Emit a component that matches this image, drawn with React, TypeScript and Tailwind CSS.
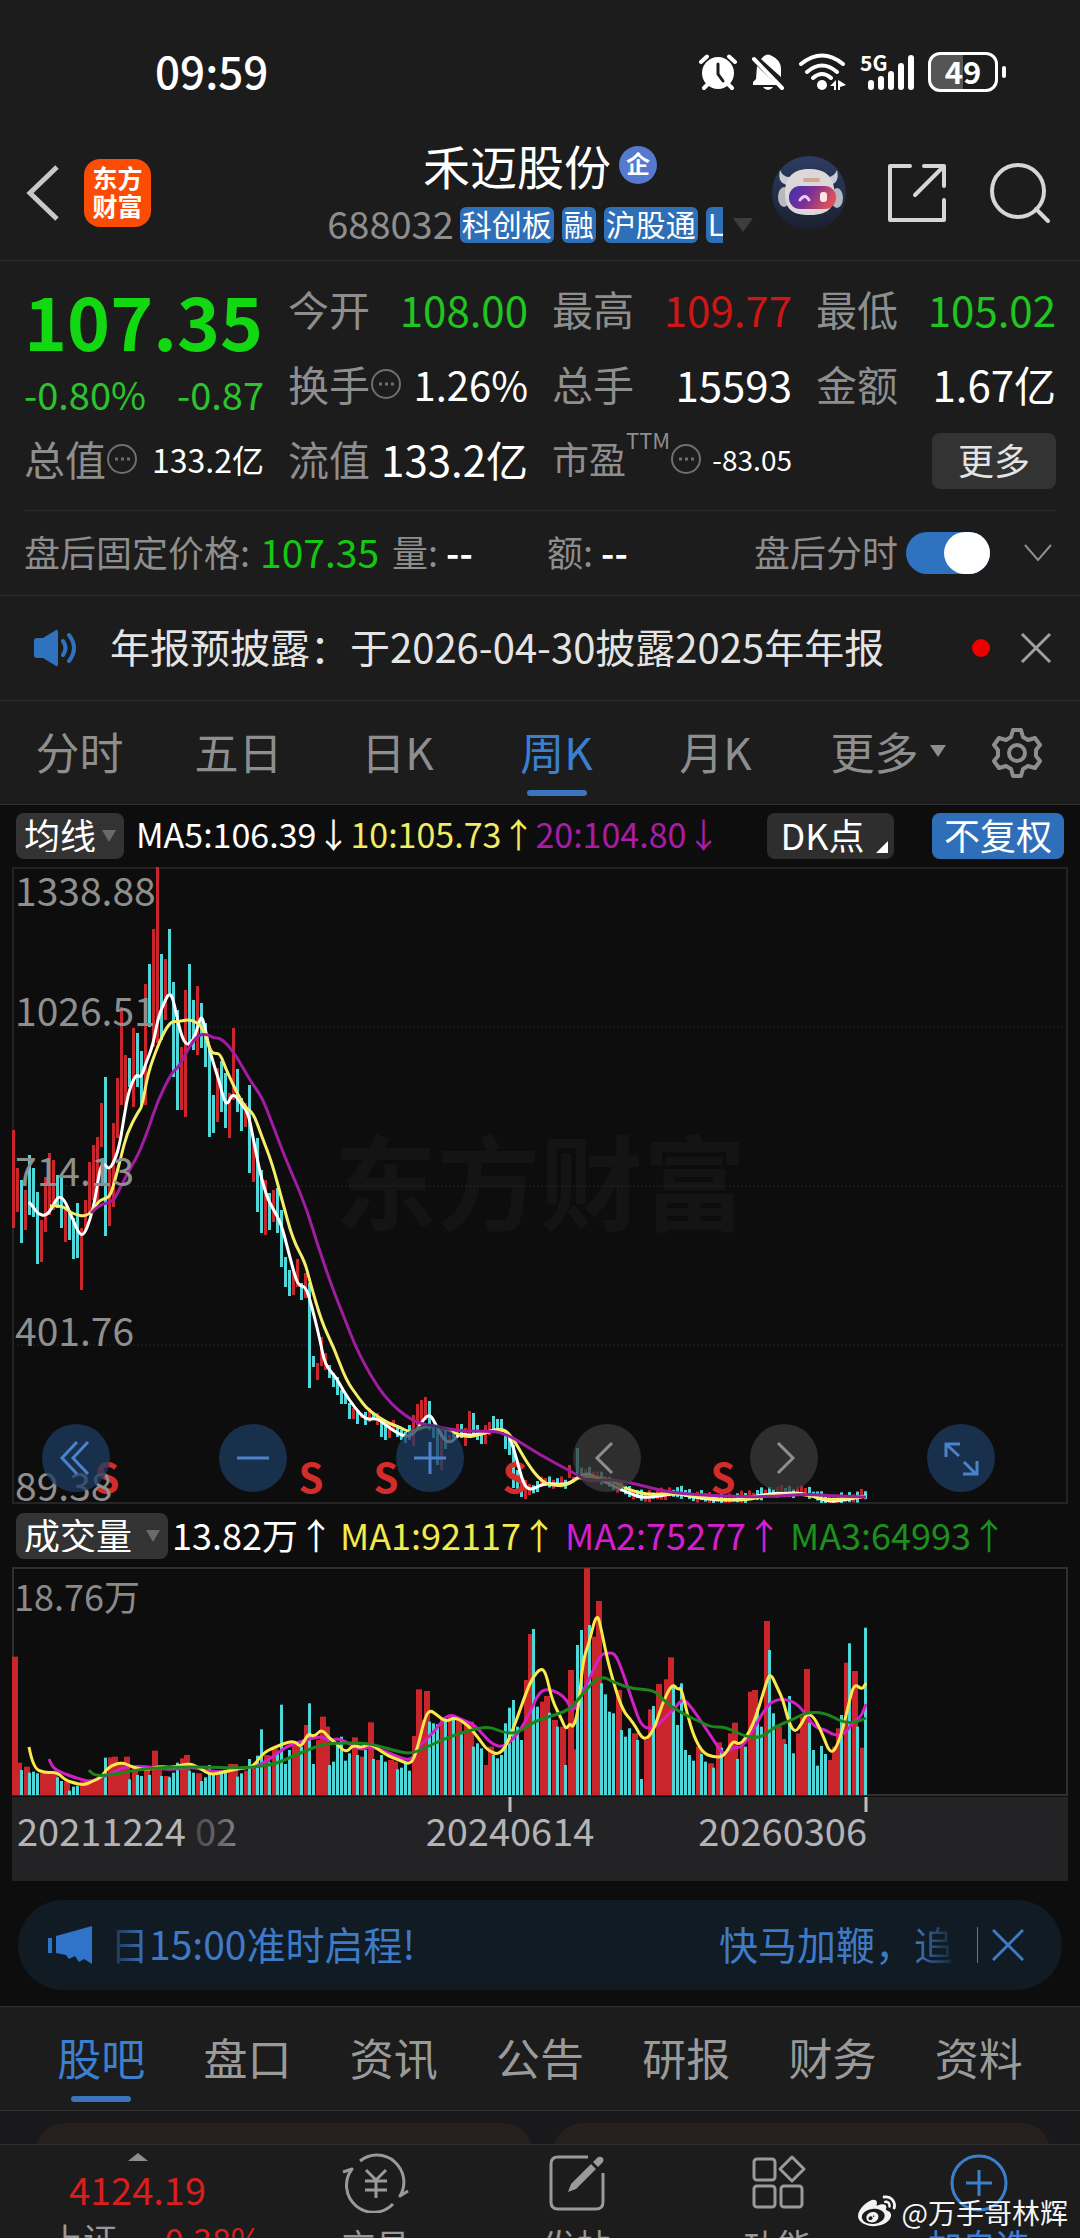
import React, { useState } from 'react';
import { FaWeibo } from 'react-icons/fa';

type Point = [number, number];

// one token per week: r = up, c = down, then the top of the volume bar on a 3x grid
const WEEKS = `r470 r788 c810 r800 c818 c815 c820 r820 r822 r820 r815 c832 c843 r845 c872 c860 c857 r845 r850 r848
r838 r838 r835 c773 r772 r770 r795 r785 r770 c838 r800 c825 c828 r810 c825 r752 r800 c828 r828 c832
c818 c788 r775 r765 c812 c818 r820 c843 c832 c795 c825 r820 c815 c818 r792 r792 c830 c820 r812 c777
r795 c767 c688 r765 c787 r745 c758 c614 c792 c750 r735 r735 c740 r675 c610 c792 r720 r650 r680 c795
c785 c735 c710 c782 c760 r712 c765 r770 c750 r667 c777 r780 c765 c785 r780 r785 c808 c803 c790 c812
r708 r568 r660 r573 c665 c670 c673 r655 c660 r645 c650 r660 c700 r670 r665 c740 c730 c745 r795 r740
c765 c775 c765 c670 c623 c600 c680 c720 r540 r402 c387 c620 r605 r588 c638 r660 c680 r680 c795 r510
r748 c435 c390 r205 c375 r410 r303 c550 c583 c635 c640 r570 c690 c710 c685 r700 c720 c837 r720 r628
c618 r552 r600 r538 r472 c555 c675 c550 c750 c765 c782 r740 c762 c785 r790 c803 r727 c743 r760 r700
r668 c777 r740 c740 r575 r570 c625 c680 r363 c450 c640 r680 r717 c732 c588 c760 r700 r650 r507 c668
c750 c797 c738 c762 r780 r740 r685 c645 r488 c430 r513 c680 r743 c383`
  .trim()
  .split(/\s+/)
  .map((t) => ({ up: t[0] === 'r', top: Number(t.slice(1)) }));

// high and low of each candle
const CANDLES = `1130,1228 1168,1212 1180,1243 1190,1230 1155,1215 1168,1217 1192,1264 1220,1262 1177,1232 1153,1215
1160,1210 1175,1208 1178,1228 1207,1242 1210,1240 1218,1259 1203,1258 1228,1290 1200,1230 1162,1215
1145,1200 1137,1203 1103,1147 1077,1236 1167,1226 1123,1207 1078,1138 1007,1105 1055,1107 1058,1087
1028,1107 1033,1087 1051,1107 984,1105 964,1027 929,1047 867,1043 954,1040 959,1020 929,993
982,1077 1010,1110 1047,1110 990,1117 964,1047 1000,1050 986,1055 1003,1048 1023,1067 1050,1137
1095,1133 1068,1122 1061,1112 1073,1128 1093,1138 1028,1100 1069,1112 1098,1131 1103,1127 1085,1173
1140,1182 1138,1212 1170,1233 1180,1235 1193,1230 1190,1222 1188,1233 1210,1267 1257,1287 1270,1296
1270,1295 1259,1287 1283,1300 1273,1298 1283,1388 1356,1367 1363,1380 1337,1366 1353,1370 1365,1378
1373,1387 1377,1395 1390,1404 1393,1404 1403,1419 1408,1419 1410,1424 1413,1418 1412,1425 1408,1422
1414,1420 1413,1425 1420,1437 1424,1440 1422,1438 1420,1430 1428,1437 1430,1440 1432,1443 1425,1440
1415,1446 1404,1425 1400,1422 1397,1420 1401,1430 1425,1438 1430,1465 1430,1470 1430,1449 1435,1442
1428,1438 1424,1436 1424,1438 1428,1446 1411,1436 1413,1436 1425,1440 1430,1444 1425,1444 1422,1435
1416,1430 1419,1432 1419,1432 1430,1449 1438,1455 1445,1488 1470,1490 1480,1497 1480,1499 1484,1495`
  .trim()
  .split(/\s+/)
  .map((t) => t.split(',').map(Number) as Point);

const parse = (s: string) => s.trim().split(/\s+/).map((t) => t.split(',').map(Number) as Point);

const MA5 = parse(`29,1202 34,1208 38,1214 46,1216 52,1208 58,1196 64,1199 71,1215 79,1234 84,1235 90,1220 95,1200 100,1168
104,1163 109,1170 115,1160 120,1143 124,1117 129,1090 136,1074 141,1078 146,1063 153,1045 158,1018 164,1003 169,993
173,998 179,1027 184,1042 189,1045 195,1037 201,1014 205,1027 210,1053 219,1080 226,1108 233,1092 241,1104 248,1112
253,1137 260,1173 267,1197 272,1207 281,1223 288,1250 296,1280 300,1286 306,1287 312,1307 320,1340 325,1365 336,1377
344,1392 355,1408 366,1420 377,1418 386,1425 398,1434 410,1437 418,1428 429,1412 437,1427 444,1440 451,1443 460,1433
470,1436 482,1433 503,1428 510,1437 517,1460 523,1483 530,1491 544,1483 567,1485 578,1477 587,1473 596,1477 611,1485
629,1493 642,1498 659,1496 678,1493 692,1497 726,1501 752,1497 774,1493 807,1493 827,1502 844,1500 866,1496`);

const MA10 = parse(`50,1206 62,1205 72,1214 88,1217 98,1202 103,1199 110,1197 115,1180 121,1157 127,1133 138,1112 142,1107
148,1073 157,1048 165,1030 172,1021 177,1022 191,1019 203,1027 210,1050 214,1054 220,1053 227,1072 244,1107 253,1112
262,1137 272,1163 282,1200 293,1240 305,1262 310,1282 322,1323 334,1348 346,1380 358,1397 368,1410 386,1422 399,1427
411,1433 427,1425 448,1429 465,1438 482,1434 503,1428 513,1438 527,1463 540,1480 552,1486 568,1485 580,1476 596,1477
611,1480 629,1490 648,1495 674,1493 700,1497 729,1500 748,1500 774,1494 807,1494 827,1501 866,1496`);

const MA20 = parse(`91,1213 100,1204 113,1202 119,1190 131,1167 139,1153 148,1130 158,1100 172,1072 179,1067 189,1047 198,1035
207,1034 213,1038 221,1038 234,1052 251,1082 262,1097 272,1123 286,1160 305,1204 317,1243 332,1287 344,1317 358,1353
384,1398 413,1422 434,1426 458,1431 482,1431 504,1432 540,1455 574,1473 589,1482 607,1479 633,1483 670,1493 722,1496
766,1497 807,1494 833,1496 866,1497`);

const VOL1 = parse(`29,179 33,200 45,205 57,204 65,212 74,215 84,217 91,214 102,209 108,199 122,194 134,200 148,202 160,198
172,200 189,195 200,200 210,207 224,204 241,200 253,199 263,185 275,179 294,172 301,180 308,165 314,169 322,161 329,170
336,175 346,185 353,177 362,180 370,175 386,187 399,192 411,197 417,182 425,149 430,142 437,147 446,154 455,149 468,157
480,172 487,182 501,188 513,162 527,122 533,109 541,100 546,105 552,132 561,150 566,162 570,155 573,160 578,145 583,92
589,75 597,43 602,65 609,99 622,142 633,154 644,174 654,162 661,139 672,115 678,122 681,119 687,145 694,169 703,185
713,189 724,189 733,172 739,177 746,170 755,152 765,119 770,104 777,119 783,132 789,155 795,165 802,155 807,145 814,149
822,165 831,188 840,172 848,139 854,115 862,122 866,115`);

const VOL2 = parse(`49,191 52,199 60,204 76,210 90,214 103,209 114,204 127,198 152,199 169,202 193,199 207,203 224,204 244,200
255,199 265,194 275,187 289,177 310,171 322,168 329,173 339,170 351,177 363,182 370,178 389,185 411,194 417,180 436,162
448,145 463,152 475,157 492,177 504,179 518,166 530,145 539,124 548,121 559,125 567,132 573,145 580,129 589,112 600,87
607,85 615,85 622,102 633,135 642,160 655,160 666,149 676,139 683,130 692,140 707,162 718,179 724,187 733,179 742,180
755,159 763,144 774,131 792,132 805,144 814,159 826,162 833,167 844,167 853,154 861,149 866,136`);

const VOL3 = parse(`89,202 93,208 110,207 131,203 152,200 179,199 207,199 234,200 255,199 275,196 289,190 310,181 327,175
362,175 375,177 396,183 411,186 427,179 444,171 461,165 479,160 491,159 504,165 518,165 533,154 548,149 570,142 583,125
600,107 615,115 633,121 655,122 666,135 685,147 703,155 711,159 726,159 746,169 761,170 774,159 792,152 807,144 826,145
844,155 857,154 866,150`);

const smooth = (pts: Point[]) => {
  let d = `M${pts[0][0]} ${pts[0][1]}`;
  for (let i = 1; i < pts.length - 1; i++) {
    const mx = (pts[i][0] + pts[i + 1][0]) / 2;
    const my = (pts[i][1] + pts[i + 1][1]) / 2;
    d += ` Q${pts[i][0]} ${pts[i][1]} ${mx} ${my}`;
  }
  const last = pts[pts.length - 1];
  return `${d} L${last[0]} ${last[1]}`;
};

const valueAt = (pts: Point[], x: number) => {
  for (let i = 1; i < pts.length; i++) {
    if (pts[i][0] >= x) {
      const [x0, y0] = pts[i - 1];
      const [x1, y1] = pts[i];
      return y0 + ((y1 - y0) * (x - x0)) / (x1 - x0);
    }
  }
  return pts[pts.length - 1][1];
};

const weekX = (i: number) => 13 + i * 4;

const candleRange = (i: number): Point => {
  if (CANDLES[i]) return CANDLES[i];
  if (i === 139) return [1465, 1478];
  if (i === 141) return [1448, 1474];
  const mid = valueAt(MA5, weekX(i));
  return [mid - 4 - ((i * 7) % 5), Math.min(mid + 2 + ((i * 5) % 4), 1503)];
};

const UP = '#c9252a';
const DOWN = '#4fd8da';

function StatusBar() {
  return (
    <div className="flex h-[126px] items-center justify-between pt-[18px] pl-[155px] pr-[74px] text-white">
      <span className="pb-1 text-[44px] leading-none font-medium">09:59</span>
      <div className="flex items-center gap-3.5">
        <svg className="h-[38px] w-[38px]" viewBox="0 0 38 38" fill="none" stroke="currentColor" strokeWidth="4" strokeLinecap="round">
          <path d="M2 9 L8 3.500M36 9 L30 3.500M9 31 L5 35M29 31 L33 35" />
          <circle cx="19" cy="20" r="16" fill="currentColor" stroke="none" />
          <path d="M19 11 V21 L24 28" stroke="#1c1c1c" strokeWidth="3" />
        </svg>
        <svg className="h-[38px] w-[34px]" viewBox="0 0 34 38" fill="currentColor">
          <path d="M13 3 Q17 0 21 3 Q30 7 30 16 V24 L10 6 Z" />
          <path d="M6 13 L26 32 H2 V29 L5 26 Z" />
          <path d="M12 34 H22 Q20 37 17 37 Q14 37 12 34 Z" />
          <path d="M3 6 L31 35" stroke="currentColor" strokeWidth="4" strokeLinecap="round" />
        </svg>
        <svg className="h-[38px] w-[47px]" viewBox="0 0 47 38" fill="none" stroke="currentColor" strokeWidth="4" strokeLinecap="round">
          <path d="M2 11 Q23 -6 44 11M8 19 Q23 6 38 19M14 25 Q23 17 32 25" />
          <circle cx="23" cy="32" r="5" fill="currentColor" stroke="none" />
          <path d="M31 33 L37 27 V37 H35 V33 ZM39 27 V37 H41 V34 L47 32 L41 28 Z" fill="currentColor" stroke="none" />
        </svg>
        <svg className="h-[38px] w-[54px]" viewBox="0 0 54 38" fill="currentColor">
          <text x="0" y="18" fontSize="21" fontWeight="700">5G</text>
          <rect x="8" y="27" width="6" height="10" rx="3" />
          <rect x="18" y="23" width="6" height="14" rx="3" />
          <rect x="28" y="18" width="6" height="19" rx="3" />
          <rect x="38" y="10" width="6" height="27" rx="3" />
          <rect x="48" y="2" width="6" height="35" rx="3" />
        </svg>
        <div className="flex items-center gap-1">
          <div className="flex h-10 w-[70px] items-center justify-center rounded-xl border-[3px] border-white bg-linear-to-r from-[#555] from-50% to-transparent to-50% pb-1 text-[31px] leading-none font-bold">
            49
          </div>
          <div className="h-3 w-1 rounded-full bg-white" />
        </div>
      </div>
    </div>
  );
}

function Robot() {
  return (
    <svg className="h-[74px] w-[74px]" viewBox="0 0 74 74">
      <defs>
        <linearGradient id="visor" x1="0" y1="0" x2="1" y2="0.300">
          <stop offset="0" stopColor="#3a34b0" />
          <stop offset="0.500" stopColor="#7b2f96" />
          <stop offset="1" stopColor="#d9505a" />
        </linearGradient>
        <linearGradient id="sky" x1="0" y1="0" x2="0" y2="1">
          <stop offset="0" stopColor="#2c3c62" />
          <stop offset="1" stopColor="#1b2030" />
        </linearGradient>
      </defs>
      <circle cx="37" cy="37" r="37" fill="url(#sky)" />
      <path d="M8 14 Q5 27 15 29 L20 21 Q11 22 8 14 Z" fill="#c9cbd4" />
      <path d="M65 14 Q68 27 58 29 L53 21 Q62 22 65 14 Z" fill="#c9cbd4" />
      <ellipse cx="12" cy="41" rx="6" ry="10" fill="#b7b8c0" />
      <ellipse cx="65" cy="42" rx="6" ry="10" fill="#b7b8c0" />
      <path d="M37 13 C53 13 60 20 62 32 C64 50 58 59 38 59 C18 59 13 52 13 36 C13 20 23 13 37 13 Z" fill="#dcd8d9" />
      <rect x="31" y="22" width="17" height="4" rx="2" fill="#cfa88f" />
      <rect x="17" y="30" width="47" height="23" rx="11" fill="url(#visor)" />
      <path d="M28 44 Q33 37 37 44" stroke="#e9c8ff" strokeWidth="3" fill="none" strokeLinecap="round" />
      <rect x="48" y="36" width="7" height="10" rx="3" fill="#ffe3e0" />
    </svg>
  );
}

function Tag({ children }: { children: React.ReactNode }) {
  return <span className="flex h-9 shrink-0 items-center rounded-md bg-[#2f6fb8] px-0.5 pb-1 text-[30px] leading-none text-white">{children}</span>;
}

function Header() {
  return (
    <header className="grid h-[135px] grid-cols-[1fr_auto_1fr] items-center border-b border-[#303030]">
      <div className="flex items-center gap-6 pl-6">
        <button aria-label="返回">
          <svg className="h-[58px] w-9" viewBox="0 0 36 58" fill="none" stroke="#c8c8c8" strokeWidth="5">
            <path d="M33 3 L6 29 L33 55" />
          </svg>
        </button>
        <a href="#home" className="flex h-[68px] w-[67px] flex-col items-center justify-center rounded-2xl bg-[#fb4c05] pb-1 text-[25px] leading-7 font-bold text-white">
          <span>东方</span>
          <span>财富</span>
        </a>
      </div>
      <div className="flex flex-col items-center gap-4 pb-1">
        <div className="flex items-center gap-2">
          <h1 className="text-[47px] leading-[52px] text-white">禾迈股份</h1>
          <span className="flex h-[38px] w-[38px] items-center justify-center rounded-full bg-[#5579cf] pb-1 text-2xl leading-none font-bold text-white">企</span>
        </div>
        <div className="flex h-9 items-center">
          <span className="mr-1.5 pb-1 text-[38px] leading-9 text-[#8e8e8e]">688032</span>
          <div className="flex w-[263px] gap-2 overflow-hidden">
            <Tag>科创板</Tag>
            <Tag>融</Tag>
            <Tag>沪股通</Tag>
            <Tag>LOF</Tag>
          </div>
          <svg className="ml-2.5 h-3.5 w-5" viewBox="0 0 20 14" fill="#3d3d3d"><path d="M0 0 H20 L10 14 Z" /></svg>
        </div>
      </div>
      <div className="flex items-center justify-end gap-10 pr-7">
        <button aria-label="助手" className="shrink-0"><Robot /></button>
        <button aria-label="分享" className="shrink-0">
          <svg className="h-16 w-16" viewBox="0 0 64 64" fill="none" stroke="#d6d6d6" strokeWidth="4" strokeLinecap="round" strokeLinejoin="round">
            <path d="M24 5 H4 V59 H58 V39M38 5 H58 V25M58 5 L29 34" />
          </svg>
        </button>
        <button aria-label="搜索" className="shrink-0">
          <svg className="h-[62px] w-[62px]" viewBox="0 0 62 62" fill="none" stroke="#d6d6d6" strokeWidth="4" strokeLinecap="round">
            <circle cx="28" cy="29" r="26" />
            <path d="M46 47 L58 59" />
          </svg>
        </button>
      </div>
    </header>
  );
}

function Info() {
  return (
    <svg className="h-8 w-8 shrink-0" viewBox="0 0 32 32" fill="none" stroke="#6f6f6f" strokeWidth="2">
      <circle cx="16" cy="16" r="14" />
      <path d="M9 16 h3M15 16 h3M21 16 h3" strokeWidth="3" />
    </svg>
  );
}

interface StatProps {
  label: string;
  value: string;
  info?: boolean;
  note?: string;
  tone?: string;
  size?: string;
}

function Stat({ label, value, info, note, tone = 'text-white', size = 'text-[42px]' }: StatProps) {
  return (
    <div className="flex h-[75px] items-center justify-between pb-1 whitespace-nowrap">
      <span className="flex items-center text-[#8e8e8e]">
        <span className={note ? 'text-[37px]' : 'text-[41px]'}>{label}</span>
        {note && <sup className="-top-5 text-[22px] leading-none">{note}</sup>}
        {info && <Info />}
      </span>
      <span className={`${size} ${tone}`}>{value}</span>
    </div>
  );
}

function Quote() {
  return (
    <section className="mx-6 border-b border-[#2a2a2a] pt-3 pb-3">
      <div className="grid grid-cols-4 gap-x-6 leading-none">
        <div className="row-span-2 flex flex-col whitespace-nowrap">
          <strong className="text-[73px] leading-[92px] font-bold text-[#12d812]">107.35</strong>
          <div className="flex justify-between text-[38px] leading-[58px] text-[#2cc42c]">
            <span>-0.80%</span>
            <span>-0.87</span>
          </div>
        </div>
        <Stat label="今开" value="108.00" tone="text-[#1fc61f]" />
        <Stat label="最高" value="109.77" tone="text-[#d01515]" />
        <Stat label="最低" value="105.02" tone="text-[#1fc61f]" />
        <Stat label="换手" value="1.26%" info size="text-[40px]" />
        <Stat label="总手" value="15593" />
        <Stat label="金额" value="1.67亿" />
        <Stat label="总值" value="133.2亿" info size="text-[32px]" />
        <Stat label="流值" value="133.2亿" />
        <Stat label="市盈" note="TTM" value="-83.05" info size="text-[28px]" />
        <div className="flex h-[75px] items-center justify-end">
          <button className="h-14 w-[124px] rounded-lg bg-[#333] pb-1 text-[36px] leading-none text-[#e4e4e4]">更多</button>
        </div>
      </div>
    </section>
  );
}

function AfterHours() {
  const [on, setOn] = useState(true);

  return (
    <section className="flex h-[85px] items-center justify-between border-b border-[#303030] px-6 text-[36px] leading-none whitespace-nowrap text-[#8e8e8e]">
      <div className="flex items-center pb-1">
        <span>盘后固定价格:</span>
        <span className="ml-2.5 w-[132px] text-[39px] text-[#12c812]">107.35</span>
        <span className="w-[155px]">量: <span className="font-bold text-white">--</span></span>
        <span>额: <span className="font-bold text-white">--</span></span>
      </div>
      <div className="flex items-center">
        <label htmlFor="after-hours" className="pb-1">盘后分时</label>
        <input
          id="after-hours"
          type="checkbox"
          checked={on}
          onChange={(e) => setOn(e.target.checked)}
          className="ml-2 flex h-[42px] w-[84px] appearance-none items-center rounded-full bg-[#444] before:h-[42px] before:w-[46px] before:rounded-full before:bg-white checked:justify-end checked:bg-[#2f72c0]"
        />
        <button aria-label="展开" className="ml-8 pr-0.5">
          <svg className="h-5 w-8" viewBox="0 0 32 20" fill="none" stroke="#8e8e8e" strokeWidth="2"><path d="M3 2 L16 17 L29 2" /></svg>
        </button>
      </div>
    </section>
  );
}

function Notice() {
  return (
    <section className="flex h-[105px] items-center border-b border-[#303030] pr-7 pl-8">
      <svg className="h-10 w-12 shrink-0" viewBox="0 0 48 40" fill="#2f72c0">
        <path d="M2 13 Q2 10 5 10 H11 L24 2 Q26 1 26 4 V36 Q26 39 24 38 L11 30 H5 Q2 30 2 27 Z" />
        <path d="M31 13 Q36 20 31 27M37 7 Q47 20 37 33" fill="none" stroke="#2f72c0" strokeWidth="4" strokeLinecap="round" />
      </svg>
      <p className="ml-[30px] grow pb-1 text-[40px] leading-none whitespace-nowrap text-[#e4e4e4]">年报预披露：于2026-04-30披露2025年年报</p>
      <span className="mr-[30px] h-[18px] w-[18px] shrink-0 rounded-full bg-[#ee0000]" />
      <button aria-label="关闭" className="shrink-0">
        <svg className="h-8 w-8" viewBox="0 0 32 32" fill="none" stroke="#a0a0a0" strokeWidth="3"><path d="M2 2 L30 30M30 2 L2 30" /></svg>
      </button>
    </section>
  );
}

function PeriodTabs() {
  const periods = ['分时', '五日', '日K', '周K', '月K', '更多'];
  const [active, setActive] = useState('周K');

  return (
    <nav className="grid h-[104px] grid-cols-[repeat(6,159fr)_126fr] border-b border-[#303030] text-[44px] leading-none">
      {periods.map((period) => (
        <button
          key={period}
          onClick={() => setActive(period)}
          className={`relative flex items-center justify-center pb-1 ${period === active ? 'text-[#3b7fd0]' : 'text-[#8e8e8e]'}`}
        >
          {period}
          {period === '更多' && (
            <svg className="absolute right-2 h-3 w-4" viewBox="0 0 16 12" fill="#8e8e8e"><path d="M0 0 H16 L8 12 Z" /></svg>
          )}
          {period === active && <span className="absolute bottom-2 h-1.5 w-15 rounded-full bg-[#3b74bd]" />}
        </button>
      ))}
      <button aria-label="设置" className="flex items-center justify-center">
        <svg className="h-[52px] w-[52px]" viewBox="0 0 52 52" fill="none" stroke="#8e8e8e" strokeWidth="4" strokeLinejoin="round">
          <path d="M22 3 H30 L32 10 L37 13 L44 11 L49 18 L45 23 V29 L49 34 L44 41 L37 39 L32 42 L30 49 H22 L20 42 L15 39 L8 41 L3 34 L7 29 V23 L3 18 L8 11 L15 13 L20 10 Z" />
          <circle cx="26" cy="26" r="8" />
        </svg>
      </button>
    </nav>
  );
}

function Picker({ label, options, width }: { label: string; options: string[]; width: string }) {
  return (
    <div className={`relative shrink-0 ${width}`}>
      <select aria-label={label} className="h-[46px] w-full appearance-none rounded-lg bg-[#333] pb-1 pl-2 text-[36px] leading-none text-white">
        {options.map((option) => <option key={option}>{option}</option>)}
      </select>
      <svg className="pointer-events-none absolute top-4 right-2 h-3.5 w-3.5" viewBox="0 0 14 14" fill="#6a6a6a"><path d="M0 1 H14 L7 13 Z" /></svg>
    </div>
  );
}

function RoundButton({ label, muted, children }: { label: string; muted?: boolean; children: React.ReactNode }) {
  return (
    <button aria-label={label} className={`h-[68px] w-[68px] rounded-full ${muted ? 'bg-[#3a3a3a]/75' : 'bg-[#1d3c62]/75'}`}>
      <svg viewBox="0 0 68 68" fill="none" stroke={muted ? '#8e8e8e' : '#4a82cc'} strokeWidth="3">{children}</svg>
    </button>
  );
}

function PriceChart() {
  const labels: [string, number][] = [['1338.88', 906], ['1026.51', 1026], ['714.13', 1186], ['401.76', 1346], ['89.38', 1501]];

  return (
    <div className="relative">
      <svg className="block w-full" viewBox="0 867 1080 637">
        <text x="540" y="1223" textAnchor="middle" fontSize="103" fontWeight="700" fill="#141414">东方财富</text>
        <g stroke="#242424" strokeWidth="2" fill="none">
          <rect x="13" y="868" width="1054" height="635" />
          <path d="M13 1027 H1067M13 1186 H1067M13 1345 H1067" strokeWidth="1" strokeDasharray="2 2" />
        </g>
        {WEEKS.map((week, i) => {
          const [high, low] = candleRange(i);
          return <rect key={i} x={weekX(i) - 1} y={high} width="3" height={low - high} fill={week.up ? UP : DOWN} />;
        })}
        <g fontSize="40" fontWeight="700" fill="#d42b2b" textAnchor="middle">
          {[107, 311, 386, 515, 723].map((x) => <text key={x} x={x} y="1493">S</text>)}
        </g>
        <g fill="none" strokeWidth="3" strokeLinejoin="round">
          <path d={smooth(MA5)} stroke="#ffffff" />
          <path d={smooth(MA10)} stroke="#f3ef6a" />
          <path d={smooth(MA20)} stroke="#a01ca0" />
        </g>
        <g fontSize="39" fill="#8f8f8f">
          {labels.map(([text, y]) => <text key={text} x="15" y={y}>{text}</text>)}
        </g>
      </svg>
      <div className="absolute bottom-3 left-[42px] right-[85px] flex justify-between">
        <RoundButton label="最早"><path d="M35 18 L20 34 L35 50M46 18 L31 34 L46 50" /></RoundButton>
        <RoundButton label="缩小"><path d="M18 34 H50" /></RoundButton>
        <RoundButton label="放大"><path d="M18 34 H50M34 18 V50" /></RoundButton>
        <RoundButton label="上一页" muted><path d="M39 19 L24 34 L39 49" /></RoundButton>
        <RoundButton label="下一页" muted><path d="M28 19 L43 34 L28 49" /></RoundButton>
        <RoundButton label="全屏"><path d="M19 33 V20 H33M19 20 L32 32M37 38 L49 50M50 37 V50 H36" /></RoundButton>
      </div>
    </div>
  );
}

function VolumeChart() {
  return (
    <svg className="block w-full" viewBox="0 -1 1080 314">
      <defs>
        <linearGradient id="fade" x1="0" x2="1">
          <stop offset="0" stopColor="#4a4a4c" />
          <stop offset="1" stopColor="#808082" />
        </linearGradient>
      </defs>
      <rect x="13" y="0" width="1054" height="227" fill="none" stroke="#303030" strokeWidth="2" />
      {WEEKS.map((week, i) => {
        const top = (week.top - 204) / 3;
        return week.up ? <rect key={i} x={weekX(i) - 1} y={top} width="6" height={227 - top} fill={UP} /> : null;
      })}
      {WEEKS.map((week, i) => {
        const top = (week.top - 204) / 3;
        return week.up ? null : <rect key={i} x={weekX(i) - 1} y={top} width="3" height={227 - top} fill={DOWN} />;
      })}
      <g fill="none" strokeWidth="3" strokeLinejoin="round">
        <path d={smooth(VOL2)} stroke="#d320c4" />
        <path d={smooth(VOL1)} stroke="#fbe84a" />
        <path d={smooth(VOL3)} stroke="#1c861c" />
      </g>
      <text x="14" y="43" fontSize="36" fill="#8a8a8a">18.76万</text>
      <rect x="12" y="229" width="1056" height="84" fill="#232325" />
      <path d="M510 229 V244M866 229 V244" stroke="#bdbdbd" strokeWidth="3" />
      <g fontSize="38" fill="#b4b4b6">
        <text x="17" y="278">20211224</text>
        <text x="195" y="278" fill="url(#fade)">02</text>
        <text x="510" y="278" textAnchor="middle">20240614</text>
        <text x="867" y="278" textAnchor="end">20260306</text>
      </g>
    </svg>
  );
}

function Charts() {
  return (
    <section className="bg-[#0d0d0d] pb-4">
      <div className="flex h-[62px] items-center justify-between px-4 text-[34px] leading-none whitespace-nowrap">
        <div className="flex items-center">
          <Picker label="指标" options={['均线', 'BOLL']} width="w-[108px]" />
          <span className="ml-3 pb-1 text-white">MA5:106.39↓</span>
          <span className="pb-1 text-[#f0ec64]">10:105.73↑</span>
          <span className="pb-1 text-[#a81ca8]">20:104.80↓</span>
        </div>
        <div className="flex items-center gap-[38px] text-[36px]">
          <button className="relative h-[46px] w-[127px] rounded-lg bg-[#2e2e2e] pr-4 pb-1 text-white">
            DK点
            <svg className="absolute right-1.5 bottom-1.5 h-3 w-3" viewBox="0 0 12 12" fill="#fff"><path d="M12 0 V12 H0 Z" /></svg>
          </button>
          <button className="h-[46px] w-[132px] rounded-lg bg-[#2f6fba] pb-1 text-white">不复权</button>
        </div>
      </div>
      <PriceChart />
      <div className="flex h-[63px] items-center pl-4 text-[36px] leading-none whitespace-nowrap">
        <Picker label="副图指标" options={['成交量', 'MACD']} width="w-[152px]" />
        <span className="ml-1 pb-1 text-white">13.82万↑</span>
        <span className="ml-1.5 pb-1 text-[#f3ea4c]">MA1:92117↑</span>
        <span className="ml-2 pb-1 text-[#d320cf]">MA2:75277↑</span>
        <span className="ml-2 pb-1 text-[#1c8f1c]">MA3:64993↑</span>
      </div>
      <VolumeChart />
      <div className="mx-[18px] mt-[19px] flex h-[90px] items-center rounded-full bg-[#111b24] pr-[38px] pl-7 text-[39px] leading-none whitespace-nowrap text-[#3f7ac6]">
        <svg className="h-10 w-12 shrink-0" viewBox="0 0 48 40" fill="#2f74c8">
          <path d="M2 13 H6 V28 H2 ZM10 11 L46 1 V39 L38 34 L33 37 L29 31 L23 34 L20 30 L10 28 Z" />
        </svg>
        <div className="ml-4 flex grow justify-between pb-1">
          <span><span className="bg-linear-to-r from-[#1b2f47] to-[#3f7ac6] bg-clip-text text-transparent">日</span>15:00准时启程!</span>
          <span>快马加鞭，<span className="bg-linear-to-r from-[#3f7ac6] to-[#16273a] bg-clip-text text-transparent">追</span></span>
        </div>
        <span className="mr-3.5 ml-6 h-9 w-px bg-[#3f7ac6]" />
        <button aria-label="关闭" className="shrink-0">
          <svg className="h-8 w-8" viewBox="0 0 32 32" fill="none" stroke="#3f7ac6" strokeWidth="3"><path d="M1 1 L31 31M31 1 L1 31" /></svg>
        </button>
      </div>
    </section>
  );
}

function DetailTabs() {
  const tabs = ['股吧', '盘口', '资讯', '公告', '研报', '财务', '资料'];
  const [active, setActive] = useState('股吧');

  return (
    <nav className="grid h-[105px] grid-cols-7 border-y border-[#303030] px-7 text-[44px] leading-none">
      {tabs.map((tab) => (
        <button
          key={tab}
          onClick={() => setActive(tab)}
          className={`relative flex items-center justify-center pb-1 ${tab === active ? 'text-[#3b7fd0]' : 'text-[#9a9a9a]'}`}
        >
          {tab}
          {tab === active && <span className="absolute bottom-2 h-1.5 w-15 rounded-full bg-[#3b74bd]" />}
        </button>
      ))}
    </nav>
  );
}

function NavItem({ label, tone = 'text-[#9a9a9a]', children }: { label: string; tone?: string; children: React.ReactNode }) {
  return (
    <a href={`#${label}`} className={`flex flex-col items-center gap-3 pt-2 ${tone}`}>
      <svg className="h-[60px] w-[68px] shrink-0" viewBox="0 0 68 60" fill="none" stroke="currentColor" strokeWidth="3" strokeLinejoin="round">{children}</svg>
      <span className="text-[34px] leading-10 whitespace-nowrap">{label}</span>
    </a>
  );
}

function BottomNav() {
  return (
    <footer className="relative">
      <nav className="grid h-[94px] grid-cols-[275fr_201fr_201fr_201fr_202fr] overflow-hidden border-t border-[#303030]">
        <a href="#index" className="flex flex-col items-center text-[38px] leading-none text-[#d81e1e]">
          <svg className="mt-2 h-2 w-5 shrink-0" viewBox="0 0 20 8" fill="#8e8e8e"><path d="M0 8 H20 L10 0 Z" /></svg>
          <span className="mt-1.5 leading-[44px]">4124.19</span>
          <span className="mt-1.5 flex items-center gap-9 pl-9 leading-[44px] whitespace-nowrap">
            <span className="text-[#9a9a9a] text-[34px]">上证</span>
            <span className="text-[34px]">-0.38%</span>
          </span>
        </a>
        <NavItem label="交易">
          <path d="M18 8 A27 27 0 0 1 58 43 L66 38M51 51 A27 27 0 0 1 10 16 L1 19" />
          <path d="M24 17 L34 27 L44 17M34 27 V45M23 28 H45M23 37 H45" />
        </NavItem>
        <NavItem label="发帖">
          <path d="M45 4 H15 Q8 4 8 11 V49 Q8 56 15 56 H53 Q60 56 60 49 V20" />
          <path d="M25 39 L28 31 L48 11 L53 16 L33 36 ZM50 9 L55 4 Q58 3 60 5 Q61 7 60 9 L55 14 Z" fill="currentColor" stroke="none" />
        </NavItem>
        <NavItem label="功能">
          <rect x="10" y="6" width="21" height="21" rx="3" />
          <rect x="10" y="33" width="21" height="21" rx="3" />
          <rect x="37" y="33" width="21" height="21" rx="3" />
          <path d="M48 4 L60 16 L48 28 L36 16 Z" />
        </NavItem>
        <NavItem label="加自选" tone="text-[#3b7fd0]">
          <circle cx="34" cy="30" r="27" />
          <path d="M34 17 V43M21 30 H47" />
        </NavItem>
      </nav>
      <div className="absolute right-3 bottom-1.5 flex items-center gap-1.5 text-[28px] leading-10 text-[#f4f4f4]">
        <FaWeibo className="h-[38px] w-[38px]" />
        <span>@万手哥林辉</span>
      </div>
    </footer>
  );
}

export default function App() {
  return (
    <main className="bg-[#1c1c1c] font-['Noto_Sans_CJK_SC',sans-serif]">
      <StatusBar />
      <Header />
      <Quote />
      <AfterHours />
      <Notice />
      <PeriodTabs />
      <Charts />
      <DetailTabs />
      <div className="grid h-[33px] grid-cols-2 gap-[22px] overflow-hidden bg-[#19191b] pt-3 pr-[30px] pl-9">
        <div className="h-20 rounded-[28px] bg-[#271f1e]" />
        <div className="h-20 rounded-[28px] bg-[#271f1e]" />
      </div>
      <BottomNav />
    </main>
  );
}
